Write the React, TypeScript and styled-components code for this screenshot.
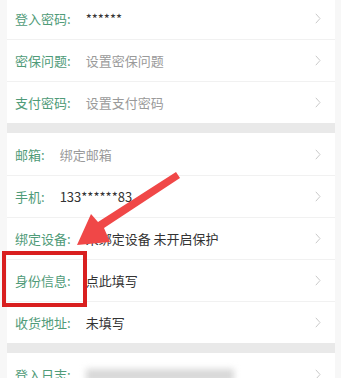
import React from "react";
import styled, { createGlobalStyle } from "styled-components";

const Global = createGlobalStyle`
  html, body { margin: 0; padding: 0; background: #f7f7f7; }
  body { font-family: "Noto Sans CJK SC", "Noto Sans", sans-serif; overflow: hidden; }
`;

const Page = styled.div`
  position: relative;
  width: 341px;
  height: 378px;
  overflow: hidden;
`;

const Column = styled.div`
  margin: -3px 6px 0 7px;
  display: flex;
  flex-direction: column;
  gap: 10px;
  background: #e9e9e9;
`;

const Section = styled.div`
  background: #fff;
  display: flex;
  flex-direction: column;
`;

const Row = styled.div`
  height: 42px;
  box-sizing: border-box;
  display: flex;
  align-items: center;
  padding: 0 14px 0 8px;
  border-top: 1px solid #f1f1f1;
  &:first-child { border-top: none; }
`;

const Label = styled.span`
  color: #4f9b78;
  font-size: 13px;
  margin-right: 15px;
  white-space: nowrap;
`;

const Value = styled.span<{ $muted?: boolean }>`
  flex: 1;
  color: ${(p) => (p.$muted ? "#9a9a9a" : "#333")};
  font-size: 13px;
  white-space: nowrap;
`;

const Blur = styled.span`
  display: inline-block;
  width: 148px;
  height: 13px;
  background: #d8d8d8;
  filter: blur(3px);
  vertical-align: middle;
`;

const Overlay = styled.svg`
  position: absolute;
  left: 0;
  top: 0;
  pointer-events: none;
`;

const Chevron = () => (
  <svg width="6" height="11" viewBox="0 0 6 11">
    <polyline points="0.8,0.8 5,5.5 0.8,10.2" fill="none" stroke="#c9c9c9" strokeWidth="1" />
  </svg>
);

type Item = { label: string; value: React.ReactNode; muted?: boolean };

const sections: Item[][] = [
  [
    { label: "登入密码:", value: "******" },
    { label: "密保问题:", value: "设置密保问题", muted: true },
    { label: "支付密码:", value: "设置支付密码", muted: true },
  ],
  [
    { label: "邮箱:", value: "绑定邮箱", muted: true },
    { label: "手机:", value: "133******83" },
    { label: "绑定设备:", value: "未绑定设备 未开启保护" },
    { label: "身份信息:", value: "点此填写" },
    { label: "收货地址:", value: "未填写" },
  ],
  [{ label: "登入日志:", value: <Blur /> }],
];

export default function App() {
  return (
    <Page>
      <Global />
      <Column>
        {sections.map((sec, i) => (
          <Section key={i}>
            {sec.map((it) => (
              <Row key={it.label}>
                <Label>{it.label}</Label>
                <Value $muted={it.muted}>{it.value}</Value>
                <Chevron />
              </Row>
            ))}
          </Section>
        ))}
      </Column>
      <Overlay width="341" height="378" viewBox="0 0 341 378">
        <rect x="4" y="253" width="81" height="52" fill="none" stroke="#d91f1f" strokeWidth="4" />
        <polygon
          points="176,172 180,178 104,228 110,242 77,245 91,214 98,222"
          fill="#f04747"
        />
      </Overlay>
    </Page>
  );
}
